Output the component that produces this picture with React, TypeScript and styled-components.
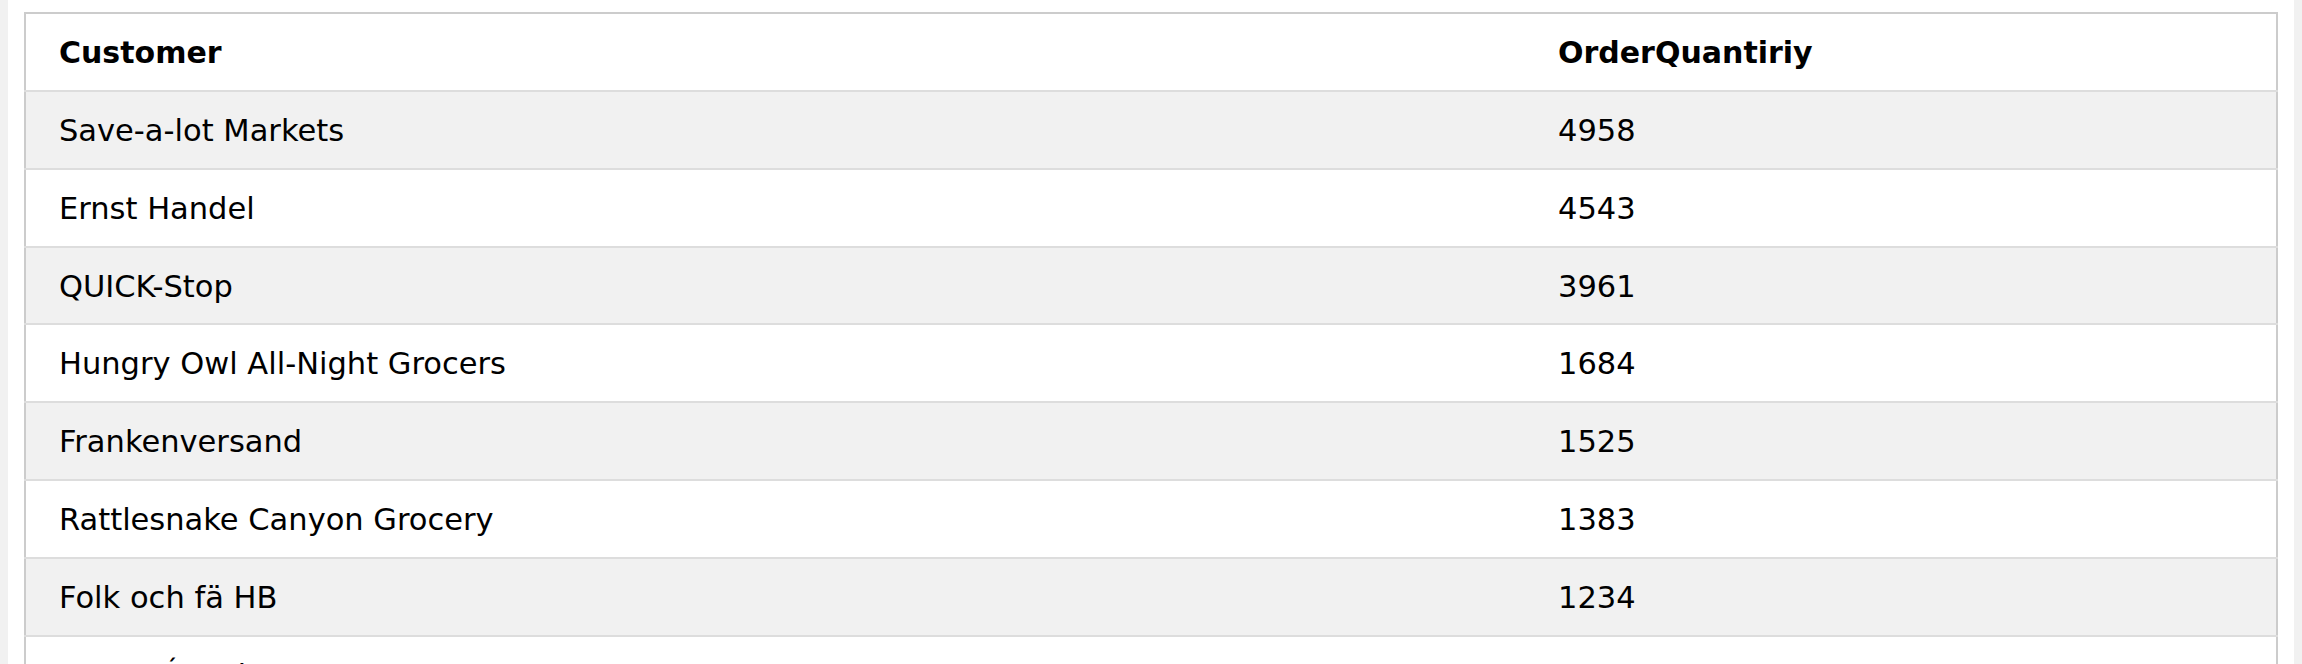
import React from 'react';
import styled, { createGlobalStyle } from 'styled-components';

interface OrderRow {
  customer: string;
  quantity: number;
}

const rows: OrderRow[] = [
  { customer: 'Save-a-lot Markets', quantity: 4958 },
  { customer: 'Ernst Handel', quantity: 4543 },
  { customer: 'QUICK-Stop', quantity: 3961 },
  { customer: 'Hungry Owl All-Night Grocers', quantity: 1684 },
  { customer: 'Frankenversand', quantity: 1525 },
  { customer: 'Rattlesnake Canyon Grocery', quantity: 1383 },
  { customer: 'Folk och fä HB', quantity: 1234 },
  { customer: 'HILARIÓN-Abastos', quantity: 1096 },
];

const GlobalStyle = createGlobalStyle`
  html, body {
    margin: 0;
    padding: 0;
    background: #f1f1f1;
  }
  body {
    font-family: "DejaVu Sans", Verdana, sans-serif;
    overflow: hidden;
  }
`;

const Page = styled.div`
  margin: 0 8px;
  background: #fff;
  padding: 12px 16px 0;
  min-height: 100vh;
  box-sizing: border-box;
`;

const Table = styled.table`
  width: 100%;
  border-collapse: collapse;
  border-spacing: 0;
  border: 2px solid #ccc;
  table-layout: fixed;
  color: #000;
`;

const Row = styled.tr<{ $striped?: boolean }>`
  background: ${(p) => (p.$striped ? '#f1f1f1' : '#fff')};
  border-bottom: 2px solid #ddd;
`;

const cellStyle = `
  padding: 17px 16px 15px;
  line-height: 43.86px;
  text-align: left;
  vertical-align: top;
  white-space: nowrap;

  &:first-child {
    padding-left: 33px;
    width: 1517px;
    box-sizing: border-box;
  }
`;

const HeadCell = styled.th`
  ${cellStyle}
  font-size: 30px;
  font-weight: bold;
`;

const Cell = styled.td`
  ${cellStyle}
  font-size: 30.5px;
  font-weight: normal;
`;

const App = () => {
  return (
    <>
      <GlobalStyle />
      <Page>
        <Table>
          <thead>
            <Row>
              <HeadCell>Customer</HeadCell>
              <HeadCell>OrderQuantiriy</HeadCell>
            </Row>
          </thead>
          <tbody>
            {rows.map((row, index) => (
              <Row key={row.customer} $striped={index % 2 === 0}>
                <Cell>{row.customer}</Cell>
                <Cell>{row.quantity}</Cell>
              </Row>
            ))}
          </tbody>
        </Table>
      </Page>
    </>
  );
};

export default App;
